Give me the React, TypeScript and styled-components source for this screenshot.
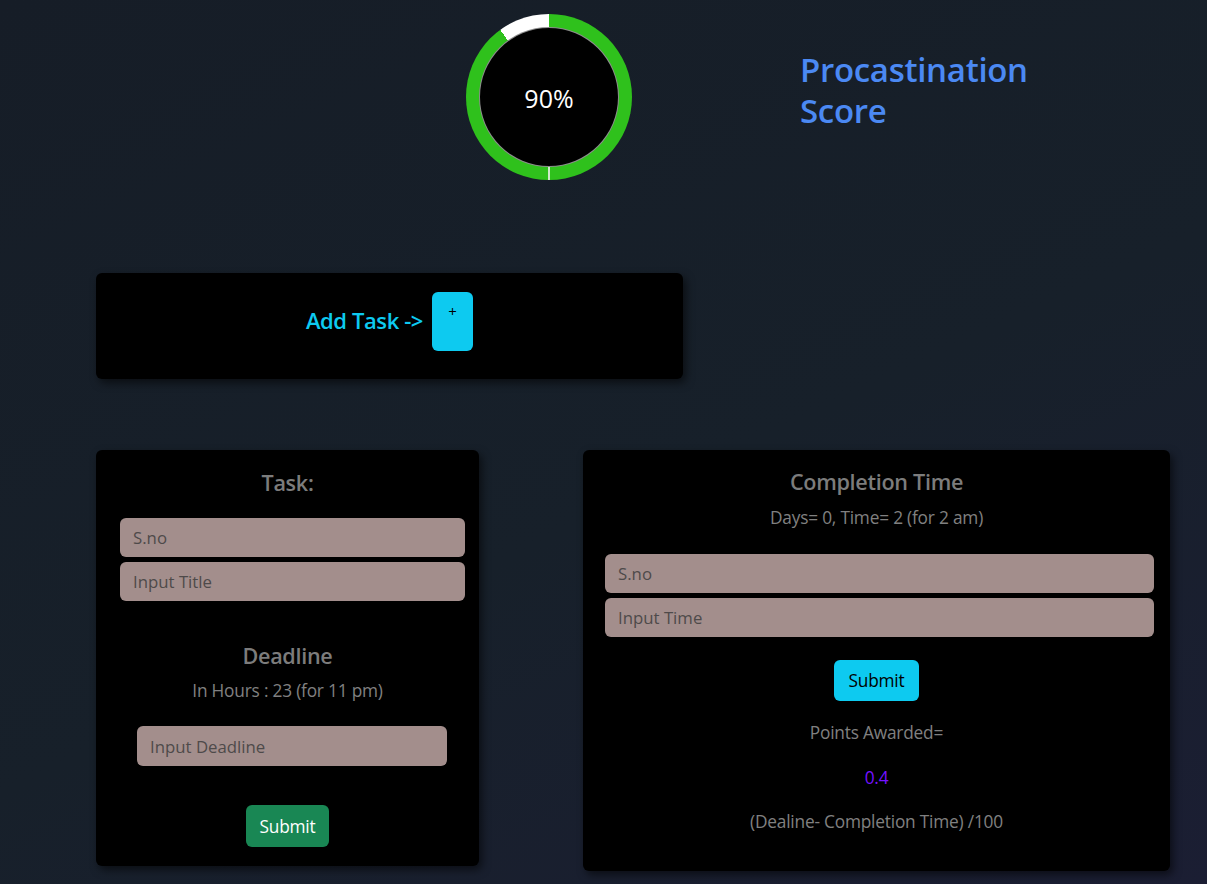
import React from "react";
import styled, { createGlobalStyle } from "styled-components";

const Global = createGlobalStyle`
  html, body { margin: 0; padding: 0; }
  body {
    min-height: 884px;
    background: linear-gradient(155deg, #161d27 0%, #17202a 55%, #1b1e33 100%);
    font-family: "Open Sans", "Noto Sans", sans-serif;
    color: #fff;
  }
  * { box-sizing: border-box; }
`;

const Page = styled.div`
  width: 1207px;
  height: 884px;
  overflow: hidden;
  padding: 14px 37px 0 96px;
  display: flex;
  flex-direction: column;
`;

const Header = styled.header`
  display: flex;
  align-items: flex-start;
  padding-left: 370px;
  gap: 168px;
  height: 259px;
`;

const Gauge = styled.div`
  position: relative;
  width: 166px;
  height: 166px;
  border-radius: 50%;
  background: conic-gradient(
    #2fc11c 0deg 179.4deg,
    #cfe9cb 179.4deg 180.6deg,
    #2fc11c 180.6deg 324deg,
    #ffffff 324deg 360deg
  );
  display: flex;
  align-items: center;
  justify-content: center;
`;

const GaugeInner = styled.div`
  width: 140px;
  height: 140px;
  border-radius: 50%;
  background: #000;
  border: 1px solid rgba(255, 255, 255, 0.55);
  display: flex;
  align-items: center;
  justify-content: center;
  font-size: 25px;
  color: #fff;
  padding-top: 2px;
`;

const Title = styled.h1`
  margin: 35px 0 0;
  display: flex;
  flex-direction: column;
  font-size: 33px;
  font-weight: 600;
  color: #4b89f3;
  letter-spacing: -0.3px;
`;

const TitleLine = styled.span`
  display: block;
  height: 41px;
  line-height: 41px;
`;

const Card = styled.section<{ $w: number; $h: number }>`
  width: ${(p) => p.$w}px;
  height: ${(p) => p.$h}px;
  background: #000;
  border-radius: 6px;
  box-shadow: 3px 4px 8px rgba(0, 0, 0, 0.55);
`;

const AddCard = styled(Card)`
  display: flex;
  align-items: center;
  justify-content: center;
  gap: 9px;
  padding: 19px 0 28px;
`;

const AddLabel = styled.span`
  color: #0dcaf0;
  font-size: 22px;
  font-weight: 600;
  letter-spacing: -0.4px;
  margin-top: -3px;
`;

const PlusButton = styled.button`
  width: 41px;
  height: 59px;
  border: none;
  border-radius: 6px;
  background: #0dcaf0;
  color: #000;
  font-family: inherit;
  font-size: 15px;
  line-height: 1;
  padding: 12px 0 0;
  display: flex;
  justify-content: center;
  align-items: flex-start;
`;

const CardsRow = styled.div`
  display: flex;
  align-items: flex-start;
  gap: 104px;
  margin-top: 71px;
`;

const FormCard = styled(Card)`
  display: flex;
  flex-direction: column;
  align-items: center;
  padding-top: ${(p) => (p.$w > 500 ? 17 : 18)}px;
`;

const Heading = styled.h4<{ $mt?: number }>`
  margin: ${(p) => p.$mt ?? 0}px 0 0;
  font-size: 21.6px;
  line-height: 30px;
  font-weight: 600;
  color: #7c7c7c;
  letter-spacing: -0.3px;
`;

const Note = styled.p<{ $mt: number; $color?: string }>`
  margin: ${(p) => p.$mt}px 0 0;
  font-size: 17.3px;
  line-height: 24px;
  color: ${(p) => p.$color ?? "#808080"};
  letter-spacing: -0.2px;
`;

const Fields = styled.div<{ $mt: number; $w: number; $ml: number }>`
  display: flex;
  flex-direction: column;
  gap: 5px;
  width: ${(p) => p.$w}px;
  margin-top: ${(p) => p.$mt}px;
  align-self: flex-start;
  margin-left: ${(p) => p.$ml}px;
`;

const Input = styled.input<{ $h?: number }>`
  width: 100%;
  height: ${(p) => p.$h ?? 39}px;
  border: none;
  border-radius: 6px;
  background: #a38e8c;
  padding: 0 13px;
  font-family: inherit;
  font-size: 16.8px;
  color: #333;
  outline: none;
  &::placeholder {
    color: #4e4a4a;
  }
`;

const SubmitButton = styled.button<{ $mt: number; $variant: "green" | "cyan" }>`
  margin-top: ${(p) => p.$mt}px;
  height: ${(p) => (p.$variant === "green" ? 42 : 41)}px;
  width: ${(p) => (p.$variant === "green" ? 83 : 85)}px;
  border: none;
  border-radius: 6px;
  background: ${(p) => (p.$variant === "green" ? "#198754" : "#0dcaf0")};
  color: ${(p) => (p.$variant === "green" ? "#fff" : "#000")};
  font-family: inherit;
  font-size: 17.3px;
  letter-spacing: -0.2px;
  padding: 0;
`;

export default function App() {
  return (
    <>
      <Global />
      <Page>
        <Header>
          <Gauge>
            <GaugeInner>90%</GaugeInner>
          </Gauge>
          <Title>
            <TitleLine>Procastination</TitleLine>
            <TitleLine>Score</TitleLine>
          </Title>
        </Header>

        <AddCard $w={587} $h={106}>
          <AddLabel>Add Task -&gt;</AddLabel>
          <PlusButton>+</PlusButton>
        </AddCard>

        <CardsRow>
          <FormCard $w={383} $h={416}>
            <Heading>Task:</Heading>
            <Fields $mt={20} $w={345} $ml={24}>
              <Input placeholder="S.no" />
              <Input placeholder="Input Title" />
            </Fields>
            <Heading $mt={40}>Deadline</Heading>
            <Note $mt={8}>In Hours : 23 (for 11 pm)</Note>
            <Fields $mt={23} $w={310} $ml={41}>
              <Input placeholder="Input Deadline" $h={40} />
            </Fields>
            <SubmitButton $mt={39} $variant="green">
              Submit
            </SubmitButton>
          </FormCard>

          <FormCard $w={587} $h={421}>
            <Heading>Completion Time</Heading>
            <Note $mt={9}>Days= 0, Time= 2 (for 2 am)</Note>
            <Fields $mt={24} $w={549} $ml={22}>
              <Input placeholder="S.no" />
              <Input placeholder="Input Time" />
            </Fields>
            <SubmitButton $mt={23} $variant="cyan">
              Submit
            </SubmitButton>
            <Note $mt={20}>Points Awarded=</Note>
            <Note $mt={21} $color="#7512ff">
              0.4
            </Note>
            <Note $mt={20}>(Dealine- Completion Time) /100</Note>
          </FormCard>
        </CardsRow>
      </Page>
    </>
  );
}
